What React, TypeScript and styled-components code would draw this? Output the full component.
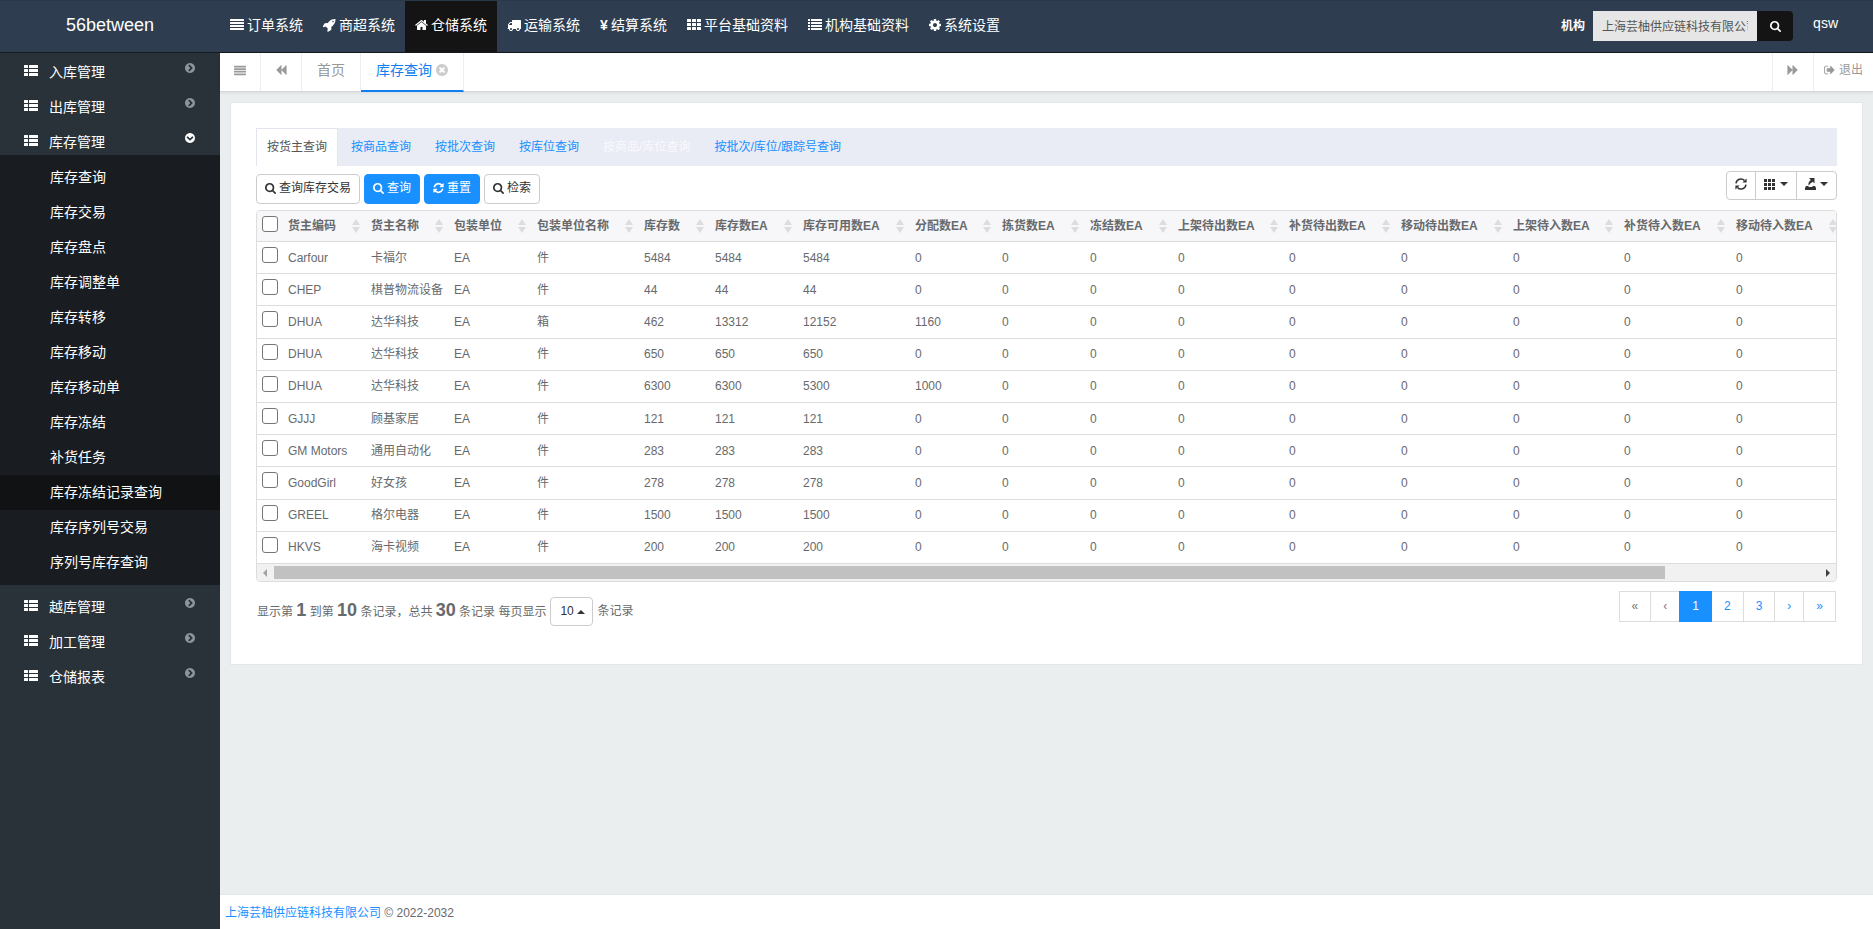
import React from "react";
import styled, { createGlobalStyle, css } from "styled-components";

const SANS = `"Liberation Sans", "Noto Sans CJK SC", sans-serif`;

const GlobalStyle = createGlobalStyle`
  *, *::before, *::after { box-sizing: border-box; }
  body { margin: 0; background: #ebeeef; color: #676a6c; font: 12px/20px ${SANS}; }
  ul { list-style: none; margin: 0; padding: 0; }
  a { color: #1890ff; text-decoration: none; }
  button, input, select { font: inherit; margin: 0; }
  button { cursor: pointer; }
`;

/* ---------- icons (1792-unit grid) ---------- */

const bar = (x: number, y: number, w: number, h: number, r: number) =>
  `M${x + r} ${y}h${w - 2 * r}a${r} ${r} 0 0 1 ${r} ${r}v${h - 2 * r}a${r} ${r} 0 0 1 -${r} ${r}h-${w - 2 * r}a${r} ${r} 0 0 1 -${r} -${r}v-${h - 2 * r}a${r} ${r} 0 0 1 ${r} -${r}z`;

const CIRCLE =
  "M1664 896q0 209-103 385.5t-279.5 279.5-385.5 103-385.5-103-279.5-279.5-103-385.5 103-385.5 279.5-279.5 385.5-103 385.5 103 279.5 279.5 103 385.5z";

const ICONS = {
  justify: [128, 512, 896, 1280].map((y) => bar(0, y, 1792, 256, 64)).join(""),
  menu: [256, 640, 1024, 1408].map((y) => bar(0, y, 1792, 256, 64)).join(""),
  th: [128, 640, 1152]
    .map((y) => [0, 640, 1280].map((x) => bar(x, y, 512, 384, 64)).join(""))
    .join(""),
  thList: [128, 640, 1152]
    .map((y) => bar(0, y, 512, 384, 64) + bar(640, y, 1152, 384, 64))
    .join(""),
  list: [128, 512, 896, 1280]
    .map((y) => bar(0, y, 256, 256, 32) + bar(384, y, 1408, 256, 32))
    .join(""),
  home: "M1472 992v480q0 26-19 45t-45 19h-384v-384h-256v384h-384q-26 0-45-19t-19-45v-480q0-1 .5-3t.5-3l575-474 575 474q1 2 1 6zm223-69l-62 74q-8 9-21 11h-3q-13 0-21-7l-692-577-692 577q-12 8-24 7-13-2-21-11l-62-74q-8-10-7-23.5t11-21.5l719-599q32-26 76-26t76 26l244 204v-195q0-14 9-23t23-9h192q14 0 23 9t9 23v408l219 182q10 8 11 21.5t-7 23.5z",
  search:
    "M1216 832q0-185-131.5-316.5t-316.5-131.5-316.5 131.5-131.5 316.5 131.5 316.5 316.5 131.5 316.5-131.5 131.5-316.5zm512 832q0 52-38 90t-90 38q-54 0-90-38l-343-342q-179 124-399 124-143 0-273.5-55.5t-225-150-150-225-55.5-273.5 55.5-273.5 150-225 225-150 273.5-55.5 273.5 55.5 225 150 150 225 55.5 273.5q0 220-124 399l343 343q37 37 37 90z",
  refresh:
    "M1639 1056q0 5-1 7-64 268-268 434.5t-478 166.5q-146 0-282.5-55t-243.5-157l-129 129q-19 19-45 19t-45-19-19-45v-448q0-26 19-45t45-19h448q26 0 45 19t19 45-19 45l-137 137q71 66 161 102t187 36q134 0 250-65t186-179q11-17 53-117 8-23 30-23h192q13 0 22.5 9.5t9.5 22.5zm25-800v448q0 26-19 45t-45 19h-448q-26 0-45-19t-19-45 19-45l138-138q-148-137-349-137-134 0-250 65t-186 179q-11 17-53 117-8 23-30 23h-199q-13 0-22.5-9.5t-9.5-22.5v-7q65-268 270-434.5t480-166.5q146 0 284 55.5t245 156.5l130-129q19-19 45-19t45 19 19 45z",
  circleRight:
    "M845 1395l454-454q19-19 19-45t-19-45l-454-454q-19-19-45-19t-45 19l-102 102q-19 19-19 45t19 45l307 307-307 307q-19 19-19 45t19 45l102 102q19 19 45 19t45-19z" +
    CIRCLE,
  circleDown:
    "M397 845l454 454q19 19 45 19t45-19l454-454q19-19 19-45t-19-45l-102-102q-19-19-45-19t-45 19l-307 307-307-307q-19-19-45-19t-45 19l-102 102q-19 19-19 45t19 45z" +
    CIRCLE,
  circleTimes:
    "M1277 1122q0-26-19-45l-181-181 181-181q19-19 19-45 0-27-19-46l-90-90q-19-19-46-19-26 0-45 19l-181 181-181-181q-19-19-45-19-27 0-46 19l-90 90q-19 19-19 46 0 26 19 45l181 181-181 181q-19 19-19 45 0 27 19 46l90 90q19 19 46 19 26 0 45-19l181-181 181 181q19 19 45 19 27 0 46-19l90-90q19-19 19-46z" +
    CIRCLE,
  cog: "M1152 896q0-106-75-181t-181-75-181 75-75 181 75 181 181 75 181-75 75-181zm512-109v222q0 12-8 23t-20 13l-185 28q-19 54-39 91 35 50 107 138 10 12 10 25t-9 23q-27 37-99 108t-94 71q-12 0-26-9l-138-108q-44 23-91 38-16 136-29 186-7 28-36 28h-222q-14 0-24.5-8.5t-11.5-21.5l-28-184q-49-16-90-37l-141 107q-10 9-25 9-14 0-25-11-126-114-165-168-7-10-7-23 0-12 8-23 15-21 51-66.5t54-70.5q-27-50-41-99l-183-27q-13-2-21-12.5t-8-23.5v-222q0-12 8-23t19-13l186-28q14-46 39-92-40-57-107-138-10-12-10-24 0-10 9-23 26-36 98.5-107.5t94.5-71.5q13 0 26 10l138 107q44-23 91-38 16-136 29-186 7-28 36-28h222q14 0 24.5 8.5t11.5 21.5l28 184q49 16 90 37l142-107q9-9 24-9 13 0 25 10 129 119 165 170 7 8 7 22 0 12-8 23-15 21-51 66.5t-54 70.5q26 50 41 98l183 28q13 2 21 12.5t8 23.5z",
  truck:
    "M640 1408q0-52-38-90t-90-38-90 38-38 90 38 90 90 38 90-38 38-90zm-384-512h384v-256h-158q-13 0-22 9l-195 195q-9 9-9 22v30zm1280 512q0-52-38-90t-90-38-90 38-38 90 38 90 90 38 90-38 38-90zm256-1088v1024q0 15-4 26.5t-13.5 18.5-16.5 11.5-23.5 6-22.5 2-25.5 0-22.5-.5q0 106-75 181t-181 75-181-75-75-181h-384q0 106-75 181t-181 75-181-75-75-181h-64q-3 0-22.5.5t-25.5 0-22.5-2-23.5-6-16.5-11.5-13.5-18.5-4-26.5q0-26 19-45t45-19v-320q0-8-.5-35t0-38 2.5-34.5 6.5-37 14-30.5 22.5-30l198-198q19-19 50.5-32t58.5-13h160v-192q0-26 19-45t45-19h1024q26 0 45 19t19 45z",
  rocket:
    "M1440 448q0-40-28-68t-68-28-68 28-28 68 28 68 68 28 68-28 28-68zm224-288q0 249-75.5 430.5t-253.5 360.5q-81 80-195 176l-20 379q-2 16-16 26l-384 224q-7 4-16 4-12 0-23-9l-64-64q-13-14-8-32l85-276-281-281-276 85q-3 1-9 1-14 0-23-9l-64-64q-17-19-5-39l224-384q10-14 26-16l379-20q96-114 176-195 188-187 358-258t431-71q14 0 24 9.5t10 22.5z",
  backward:
    "M1683 141q19-19 32-13t13 32v1472q0 26-13 32t-32-13l-710-710q-9-9-13-19v710q0 26-13 32t-32-13l-710-710q-19-19-19-45t19-45l710-710q19-19 32-13t13 32v710q4-10 13-19z",
  forward:
    "M109 141q-19-19-32-13t-13 32v1472q0 26 13 32t32-13l710-710q9-9 13-19v710q0 26 13 32t32-13l710-710q19-19 19-45t-19-45l-710-710q-19-19-32-13t-13 32v710q-4-10-13-19z",
  signOut:
    "M704 1440q0 4 1 20t.5 26.5-3 23.5-10 19.5-20.5 6.5h-320q-119 0-203.5-84.5t-84.5-203.5v-704q0-119 84.5-203.5t203.5-84.5h320q13 0 22.5 9.5t9.5 22.5q0 4 1 20t.5 26.5-3 23.5-10 19.5-20.5 6.5h-320q-66 0-113 47t-47 113v704q0 66 47 113t113 47h312l11.5 1 11.5 3 8 5.5 7 9 2 13.5zm928-544q0 26-19 45l-544 544q-19 19-45 19t-45-19-19-45v-288h-448q-26 0-45-19t-19-45v-384q0-26 19-45t45-19h448v-288q0-26 19-45t45-19 45 19l544 544q19 19 19 45z",
};

type IconName = keyof typeof ICONS;

/* Icons whose artwork is narrower than the grid get their own view box. */
const BOXES: Partial<Record<IconName, [number, number]>> = {
  home: [64, 1664],
  search: [64, 1664],
  refresh: [96, 1600],
  rocket: [64, 1664],
  cog: [128, 1536],
  circleRight: [128, 1536],
  circleDown: [128, 1536],
  circleTimes: [128, 1536],
  backward: [128, 1664],
  forward: [0, 1664],
  signOut: [64, 1600],
};

const Svg = styled.svg`
  display: block;
  flex: none;
  fill: currentColor;
`;

function Icon({ name, size = 14 }: { name: IconName; size?: number }) {
  const [x, w] = BOXES[name] ?? [0, 1792];
  return (
    <Svg
      aria-hidden
      width={Math.round((w / 1792) * size)}
      height={size}
      viewBox={`${x} 0 ${w} 1792`}
      fillRule="evenodd"
    >
      <path d={ICONS[name]} />
    </Svg>
  );
}

const SyncGlyph = () => (
  <Svg width="12" height="12" viewBox="0 0 12 12" aria-hidden>
    <path
      d="M1 5.3A5 5 0 0 1 9.4 2.4M11 6.7A5 5 0 0 1 2.6 9.6"
      fill="none"
      stroke="currentColor"
      strokeWidth="1.5"
    />
    <path d="M11.6 .4v4.2h-4.2zM.4 11.6v-4.2h4.2z" />
  </Svg>
);

const GridGlyph = () => (
  <Svg width="12" height="12" viewBox="0 0 12 12" aria-hidden>
    {[0, 4, 8].map((y) => [0, 4, 8].map((x) => <rect key={`${x}-${y}`} x={x} y={y + 1} width="3" height="3" />))}
  </Svg>
);

const ExportGlyph = () => (
  <Svg width="11" height="12" viewBox="0 0 11 12" aria-hidden>
    <path d="M1 8h2l1 1h3l1-1h2l1 2v2H0v-2z" />
    <path d="M4 0H9.500V5.500L7.800 3.800Q5.400 4.800 3.600 7.600Q2.600 4.600 5.800 1.900z" />
  </Svg>
);

const Caret = ({ up }: { up?: boolean }) => (
  <Svg width="8" height="4" viewBox="0 0 8 4" aria-hidden>
    <path d={up ? "M0 4h8L4 0z" : "M0 0h8L4 4z"} />
  </Svg>
);

/* ---------- header ---------- */

const Header = styled.header`
  display: flex;
  height: 53px;
  background: #2e3e50;
  border-top: 1px solid #28394a;
  border-bottom: 1px solid #14191f;
  color: #fff;
`;

const Brand = styled.a`
  width: 220px;
  color: #fff;
  font-size: 18px;
  line-height: 49px;
  text-align: center;
`;

const SystemNav = styled.nav`
  display: flex;
  flex: 1;
`;

const SystemLink = styled.a<{ $active?: boolean }>`
  display: flex;
  align-items: center;
  gap: 3px;
  padding: 0 10px 4px;
  color: #fff;
  font-size: 14px;
  white-space: nowrap;
  background: ${(p) => (p.$active ? "#141414" : "transparent")};
  b {
    width: 8px;
  }
`;

const OrgForm = styled.form`
  display: flex;
  align-items: center;
  padding-bottom: 1px;
  label {
    padding: 0 8px 1px 0;
    font-weight: bold;
  }
`;

const OrgInput = styled.input`
  width: 164px;
  height: 30px;
  padding: 0 9px 1px;
  border: 0;
  background: #e6e6e6;
  color: #555;
`;

const OrgButton = styled.button`
  display: flex;
  align-items: center;
  justify-content: center;
  width: 36px;
  height: 30px;
  padding: 0;
  border: 0;
  border-radius: 0 4px 4px 0;
  background: #141414;
  color: #fff;
`;

const UserLink = styled.a`
  padding: 0 35px 0 20px;
  color: #fff;
  font-size: 14px;
  line-height: 44px;
`;

/* ---------- sidebar ---------- */

const Body = styled.div`
  display: flex;
  flex: 1;
`;

const Page = styled.div`
  display: flex;
  flex-direction: column;
  min-height: 100vh;
`;

const Sidebar = styled.nav`
  flex: none;
  width: 220px;
  background: #283238;
`;

const MenuList = styled.ul`
  margin-top: -3px;
`;

const MenuHead = styled.a<{ $open?: boolean }>`
  display: flex;
  align-items: center;
  height: 35px;
  padding: 0 25px 0 24px;
  color: #fff;
  font-size: 14px;
  > span {
    flex: 1;
    padding: 9px 0 0 11px;
  }
  > svg:first-child {
    margin-top: 7px;
  }
  > svg:last-child {
    color: ${(p) => (p.$open ? "#fff" : "#8d969d")};
  }
`;

const SubMenu = styled.ul`
  padding: 5px 0;
  background: #191c20;
`;

const SubLink = styled.a<{ $active?: boolean }>`
  display: block;
  padding-left: 50px;
  color: #fff;
  font-size: 14px;
  line-height: 35px;
  background: ${(p) => (p.$active ? "#111214" : "transparent")};
`;

/* ---------- page tabs ---------- */

const Main = styled.main`
  display: flex;
  flex: 1;
  flex-direction: column;
  min-width: 0;
`;

const TabBar = styled.div`
  display: flex;
  height: 39px;
  background: #fff;
  border-bottom: 1px solid #d3d9da;
  box-shadow: 0 1px 3px rgba(0, 0, 0, 0.08);
  color: #999;
`;

const TabTool = styled.button`
  display: flex;
  align-items: center;
  justify-content: center;
  width: 41px;
  padding: 0 0 4px;
  border: 0;
  border-right: 1px solid #eee;
  background: none;
  color: #999;
`;

const PageTab = styled.a<{ $active?: boolean }>`
  display: flex;
  align-items: center;
  gap: 4px;
  padding: 0 15px 5px;
  height: 39px;
  border-right: 1px solid #eee;
  color: #999;
  font-size: 14px;
  svg {
    color: #ccc;
  }
  ${(p) =>
    p.$active &&
    css`
      padding-bottom: 3px;
      border-bottom: 2px solid #1080f0;
      color: #1080f0;
    `}
`;

const TabEnd = styled.div`
  display: flex;
  margin-left: auto;
  border-left: 1px solid #eee;
`;

const Logout = styled.a`
  display: flex;
  align-items: center;
  gap: 4px;
  padding: 0 10px 4px;
  color: #999;
`;

/* ---------- card ---------- */

const Content = styled.div`
  flex: 1;
  padding: 10px;
`;

const Card = styled.section`
  padding: 25px 25px 37px;
  border: 1px solid #e3e7e9;
  background: #fff;
`;

const QueryTabs = styled.ul`
  display: flex;
  gap: 2px;
  height: 38px;
  background: #e9ebf5;
`;

const QueryTab = styled.a<{ $state?: "active" | "hover" }>`
  display: block;
  height: 38px;
  padding: 0 10px;
  border: 1px solid transparent;
  border-bottom: 0;
  line-height: 37px;
  ${(p) =>
    p.$state === "active" &&
    css`
      border-color: #e3e5ee;
      background: #fff;
      color: #555;
    `}
  ${(p) =>
    p.$state === "hover" &&
    css`
      color: #fafafd;
    `}
`;

const Toolbar = styled.div`
  display: flex;
  justify-content: space-between;
  align-items: flex-start;
  padding: 5px 0 6px;
`;

const ActionGroup = styled.div`
  display: flex;
  gap: 4px;
  padding-top: 3px;
`;

const ActionButton = styled.button<{ $primary?: boolean }>`
  display: flex;
  align-items: center;
  gap: 3px;
  height: 30px;
  padding: 0 8px 3px;
  border: 1px solid ${(p) => (p.$primary ? "#1890ff" : "#ccc")};
  border-radius: 4px;
  background: ${(p) => (p.$primary ? "#1890ff" : "#fff")};
  color: ${(p) => (p.$primary ? "#fff" : "#333")};
`;

const ToolGroup = styled.div`
  display: flex;
  height: 29px;
  border: 1px solid #ccc;
  border-radius: 4px;
`;

const ToolButton = styled.button`
  display: flex;
  align-items: center;
  gap: 4px;
  padding: 0 8px 3px;
  border: 0;
  background: none;
  color: #333;
  & + & {
    border-left: 1px solid #ccc;
  }
`;

/* ---------- table ---------- */

const TableFrame = styled.div`
  border: 1px solid #ddd;
  border-radius: 4px;
  overflow: hidden;
`;

const TableScroll = styled.div`
  overflow-x: auto;
  scrollbar-width: none;
`;

const Table = styled.table`
  width: max-content;
  height: 353px;
  table-layout: fixed;
  border-collapse: separate;
  border-spacing: 0;
  white-space: nowrap;
  th,
  td {
    padding: 0 4px;
    border-bottom: 1px solid #ddd;
    text-align: left;
    line-height: 20px;
  }
  th {
    height: 31px;
    background: #f7f7fa;
  }
  th:first-child,
  td:first-child {
    padding: 0 5px 5px;
  }
  td {
    height: 32px;
  }
`;

const HeadCell = styled.div`
  display: flex;
  align-items: center;
  justify-content: space-between;
  padding-right: 3px;
`;

const SortArrows = styled.svg`
  display: block;
  fill: #dcdcde;
`;

const Check = styled.input`
  display: block;
  width: 16px;
  height: 16px;
  margin: 0;
  appearance: none;
  border: 1px solid #767676;
  border-radius: 3px;
  background: #fff;
  &:checked {
    background: #1890ff;
  }
`;

const ScrollTrack = styled.div`
  display: flex;
  align-items: center;
  height: 17px;
  background: #f1f1f1;
`;

const ScrollArrow = styled.svg<{ $dim?: boolean }>`
  flex: none;
  width: 17px;
  height: 17px;
  fill: ${(p) => (p.$dim ? "#a3a3a3" : "#404040")};
`;

const ScrollRail = styled.div`
  flex: 1;
`;

const ScrollThumb = styled.div`
  width: 90%;
  height: 13px;
  background: #c1c1c1;
`;

/* ---------- table footer ---------- */

const TableFooter = styled.div`
  display: flex;
  justify-content: space-between;
  align-items: flex-start;
  padding: 9px 1px 0;
`;

const Summary = styled.div`
  display: flex;
  align-items: center;
  gap: 4px;
  padding-top: 5px;
  p {
    margin: 0;
    line-height: 29px;
  }
  b {
    font-size: 18px;
  }
`;

const PageSize = styled.label`
  position: relative;
  display: flex;
  color: #333;
  svg {
    position: absolute;
    right: 8px;
    top: 13px;
    pointer-events: none;
  }
`;

const PageSizeSelect = styled.select`
  width: 43px;
  height: 29px;
  padding: 0 0 1px 9px;
  appearance: none;
  border: 1px solid #ccc;
  border-radius: 4px;
  background: #fff;
  color: #333;
`;

const Pager = styled.ul`
  display: flex;
  border: 1px solid #ddd;
`;

const PageLink = styled.a<{ $kind?: "active" | "disabled" }>`
  display: block;
  height: 29px;
  padding: 0 12px;
  line-height: 28px;
  border-right: 1px solid #ddd;
  li:last-child > & {
    border-right: 0;
  }
  ${(p) =>
    p.$kind === "disabled" &&
    css`
      color: #777;
    `}
  ${(p) =>
    p.$kind === "active" &&
    css`
      height: 31px;
      margin: -1px 0 -1px -1px;
      line-height: 30px;
      padding: 0 12px 0 13px;
      border-color: #1890ff;
      background: #1890ff;
      color: #fff;
    `}
`;

const Footer = styled.footer`
  padding: 8px 5px 6px;
  border-top: 1px solid #e3e7e9;
  background: #fff;
`;

/* ---------- data ---------- */

const systems: { label: string; icon?: IconName; active?: boolean }[] = [
  { label: "订单系统", icon: "justify" },
  { label: "商超系统", icon: "rocket" },
  { label: "仓储系统", icon: "home", active: true },
  { label: "运输系统", icon: "truck" },
  { label: "结算系统" },
  { label: "平台基础资料", icon: "th" },
  { label: "机构基础资料", icon: "list" },
  { label: "系统设置", icon: "cog" },
];

const stockMenu = [
  "库存查询", "库存交易", "库存盘点", "库存调整单", "库存转移", "库存移动",
  "库存移动单", "库存冻结", "补货任务", "库存冻结记录查询", "库存序列号交易", "序列号库存查询",
];

const menu: { label: string; children?: string[] }[] = [
  { label: "入库管理" },
  { label: "出库管理" },
  { label: "库存管理", children: stockMenu },
  { label: "越库管理" },
  { label: "加工管理" },
  { label: "仓储报表" },
];

const queryTabs: { label: string; state?: "active" | "hover" }[] = [
  { label: "按货主查询", state: "active" },
  { label: "按商品查询" },
  { label: "按批次查询" },
  { label: "按库位查询" },
  { label: "按商品/库位查询", state: "hover" },
  { label: "按批次/库位/跟踪号查询" },
];

const columns: [string, number][] = [
  ["货主编码", 83], ["货主名称", 83], ["包装单位", 83], ["包装单位名称", 107],
  ["库存数", 71], ["库存数EA", 88], ["库存可用数EA", 112], ["分配数EA", 87],
  ["拣货数EA", 88], ["冻结数EA", 88], ["上架待出数EA", 111], ["补货待出数EA", 112],
  ["移动待出数EA", 112], ["上架待入数EA", 111], ["补货待入数EA", 112], ["移动待入数EA", 112],
];

const stock: [string, string, string, number, number, number, number][] = [
  ["Carfour", "卡福尔", "件", 5484, 5484, 5484, 0],
  ["CHEP", "棋普物流设备", "件", 44, 44, 44, 0],
  ["DHUA", "达华科技", "箱", 462, 13312, 12152, 1160],
  ["DHUA", "达华科技", "件", 650, 650, 650, 0],
  ["DHUA", "达华科技", "件", 6300, 6300, 5300, 1000],
  ["GJJJ", "顾基家居", "件", 121, 121, 121, 0],
  ["GM Motors", "通用自动化", "件", 283, 283, 283, 0],
  ["GoodGirl", "好女孩", "件", 278, 278, 278, 0],
  ["GREEL", "格尔电器", "件", 1500, 1500, 1500, 0],
  ["HKVS", "海卡视频", "件", 200, 200, 200, 0],
];

const pages: { text: string; name: string; kind?: "active" | "disabled" }[] = [
  { text: "«", name: "首页", kind: "disabled" },
  { text: "‹", name: "上一页", kind: "disabled" },
  { text: "1", name: "第1页", kind: "active" },
  { text: "2", name: "第2页" },
  { text: "3", name: "第3页" },
  { text: "›", name: "下一页" },
  { text: "»", name: "末页" },
];

/* ---------- parts ---------- */

function TopBar() {
  return (
    <Header>
      <Brand href="#">56between</Brand>
      <SystemNav>
        {systems.map((s) => (
          <SystemLink key={s.label} href="#" $active={s.active}>
            {s.icon ? <Icon name={s.icon} /> : <b>¥</b>}
            {s.label}
          </SystemLink>
        ))}
      </SystemNav>
      <OrgForm>
        <label htmlFor="org">机构</label>
        <OrgInput id="org" readOnly value="上海芸柚供应链科技有限公司" />
        <OrgButton type="button" aria-label="选择机构">
          <Icon name="search" size={12} />
        </OrgButton>
      </OrgForm>
      <UserLink href="#">qsw</UserLink>
    </Header>
  );
}

function SideMenu() {
  return (
    <Sidebar>
      <MenuList>
        {menu.map((m) => (
          <li key={m.label}>
            <MenuHead href="#" $open={!!m.children}>
              <Icon name="thList" />
              <span>{m.label}</span>
              <Icon name={m.children ? "circleDown" : "circleRight"} size={12} />
            </MenuHead>
            {m.children && (
              <SubMenu>
                {m.children.map((c) => (
                  <li key={c}>
                    <SubLink href="#" $active={c === "库存冻结记录查询"}>
                      {c}
                    </SubLink>
                  </li>
                ))}
              </SubMenu>
            )}
          </li>
        ))}
      </MenuList>
    </Sidebar>
  );
}

function PageTabs() {
  return (
    <TabBar>
      <TabTool aria-label="菜单"><Icon name="menu" size={12} /></TabTool>
      <TabTool aria-label="向左"><Icon name="backward" size={12} /></TabTool>
      <PageTab href="#">首页</PageTab>
      <PageTab href="#" $active>
        库存查询
        <Icon name="circleTimes" />
      </PageTab>
      <TabEnd>
        <TabTool aria-label="向右"><Icon name="forward" size={12} /></TabTool>
        <Logout href="#">
          <Icon name="signOut" size={12} />
          退出
        </Logout>
      </TabEnd>
    </TabBar>
  );
}

function StockTable() {
  return (
    <TableFrame>
      <TableScroll>
        <Table>
          <colgroup>
            <col style={{ width: 27 }} />
            {columns.map(([label, width]) => (
              <col key={label} style={{ width }} />
            ))}
          </colgroup>
          <thead>
            <tr>
              <th><Check type="checkbox" aria-label="全选" /></th>
              {columns.map(([label]) => (
                <th key={label}>
                  <HeadCell>
                    {label}
                    <SortArrows width="8" height="14" viewBox="0 0 8 14" aria-hidden>
                      <path d="M0 6h8L4 0zM0 8h8L4 14z" />
                    </SortArrows>
                  </HeadCell>
                </th>
              ))}
            </tr>
          </thead>
          <tbody>
            {stock.map(([code, name, unit, qty, qtyEa, free, allocated], i) => (
              <tr key={i}>
                <td><Check type="checkbox" aria-label={`${code} ${i + 1}`} /></td>
                <td>{code}</td>
                <td>{name}</td>
                <td>EA</td>
                <td>{unit}</td>
                <td>{qty}</td>
                <td>{qtyEa}</td>
                <td>{free}</td>
                <td>{allocated}</td>
                {columns.slice(8).map(([label]) => (
                  <td key={label}>0</td>
                ))}
              </tr>
            ))}
          </tbody>
        </Table>
      </TableScroll>
      <ScrollTrack aria-hidden>
        <ScrollArrow $dim viewBox="0 0 17 17"><path d="M10 5v8L6 9z" /></ScrollArrow>
        <ScrollRail><ScrollThumb /></ScrollRail>
        <ScrollArrow viewBox="0 0 17 17"><path d="M7 5v8l4-4z" /></ScrollArrow>
      </ScrollTrack>
    </TableFrame>
  );
}

export default function App() {
  return (
    <Page>
      <GlobalStyle />
      <TopBar />
      <Body>
        <SideMenu />
        <Main>
          <PageTabs />
          <Content>
            <Card>
              <QueryTabs>
                {queryTabs.map((t) => (
                  <li key={t.label}>
                    <QueryTab href="#" $state={t.state}>{t.label}</QueryTab>
                  </li>
                ))}
              </QueryTabs>
              <Toolbar>
                <ActionGroup>
                  <ActionButton><Icon name="search" size={12} />查询库存交易</ActionButton>
                  <ActionButton $primary><Icon name="search" size={12} />查询</ActionButton>
                  <ActionButton $primary><Icon name="refresh" size={12} />重置</ActionButton>
                  <ActionButton><Icon name="search" size={12} />检索</ActionButton>
                </ActionGroup>
                <ToolGroup>
                  <ToolButton aria-label="刷新"><SyncGlyph /></ToolButton>
                  <ToolButton aria-label="列"><GridGlyph /><Caret /></ToolButton>
                  <ToolButton aria-label="导出数据"><ExportGlyph /><Caret /></ToolButton>
                </ToolGroup>
              </Toolbar>
              <StockTable />
              <TableFooter>
                <Summary>
                  <p>
                    显示第 <b>1</b> 到第 <b>10</b> 条记录，总共 <b>30</b> 条记录 每页显示
                  </p>
                  <PageSize>
                    <PageSizeSelect aria-label="每页显示" defaultValue="10">
                      <option>10</option>
                      <option>25</option>
                      <option>50</option>
                    </PageSizeSelect>
                    <Caret up />
                  </PageSize>
                  <p>条记录</p>
                </Summary>
                <Pager>
                  {pages.map((p) => (
                    <li key={p.text}>
                      <PageLink href="#" aria-label={p.name} $kind={p.kind}>{p.text}</PageLink>
                    </li>
                  ))}
                </Pager>
              </TableFooter>
            </Card>
          </Content>
          <Footer>
            <a href="#">上海芸柚供应链科技有限公司</a> © 2022-2032
          </Footer>
        </Main>
      </Body>
    </Page>
  );
}
